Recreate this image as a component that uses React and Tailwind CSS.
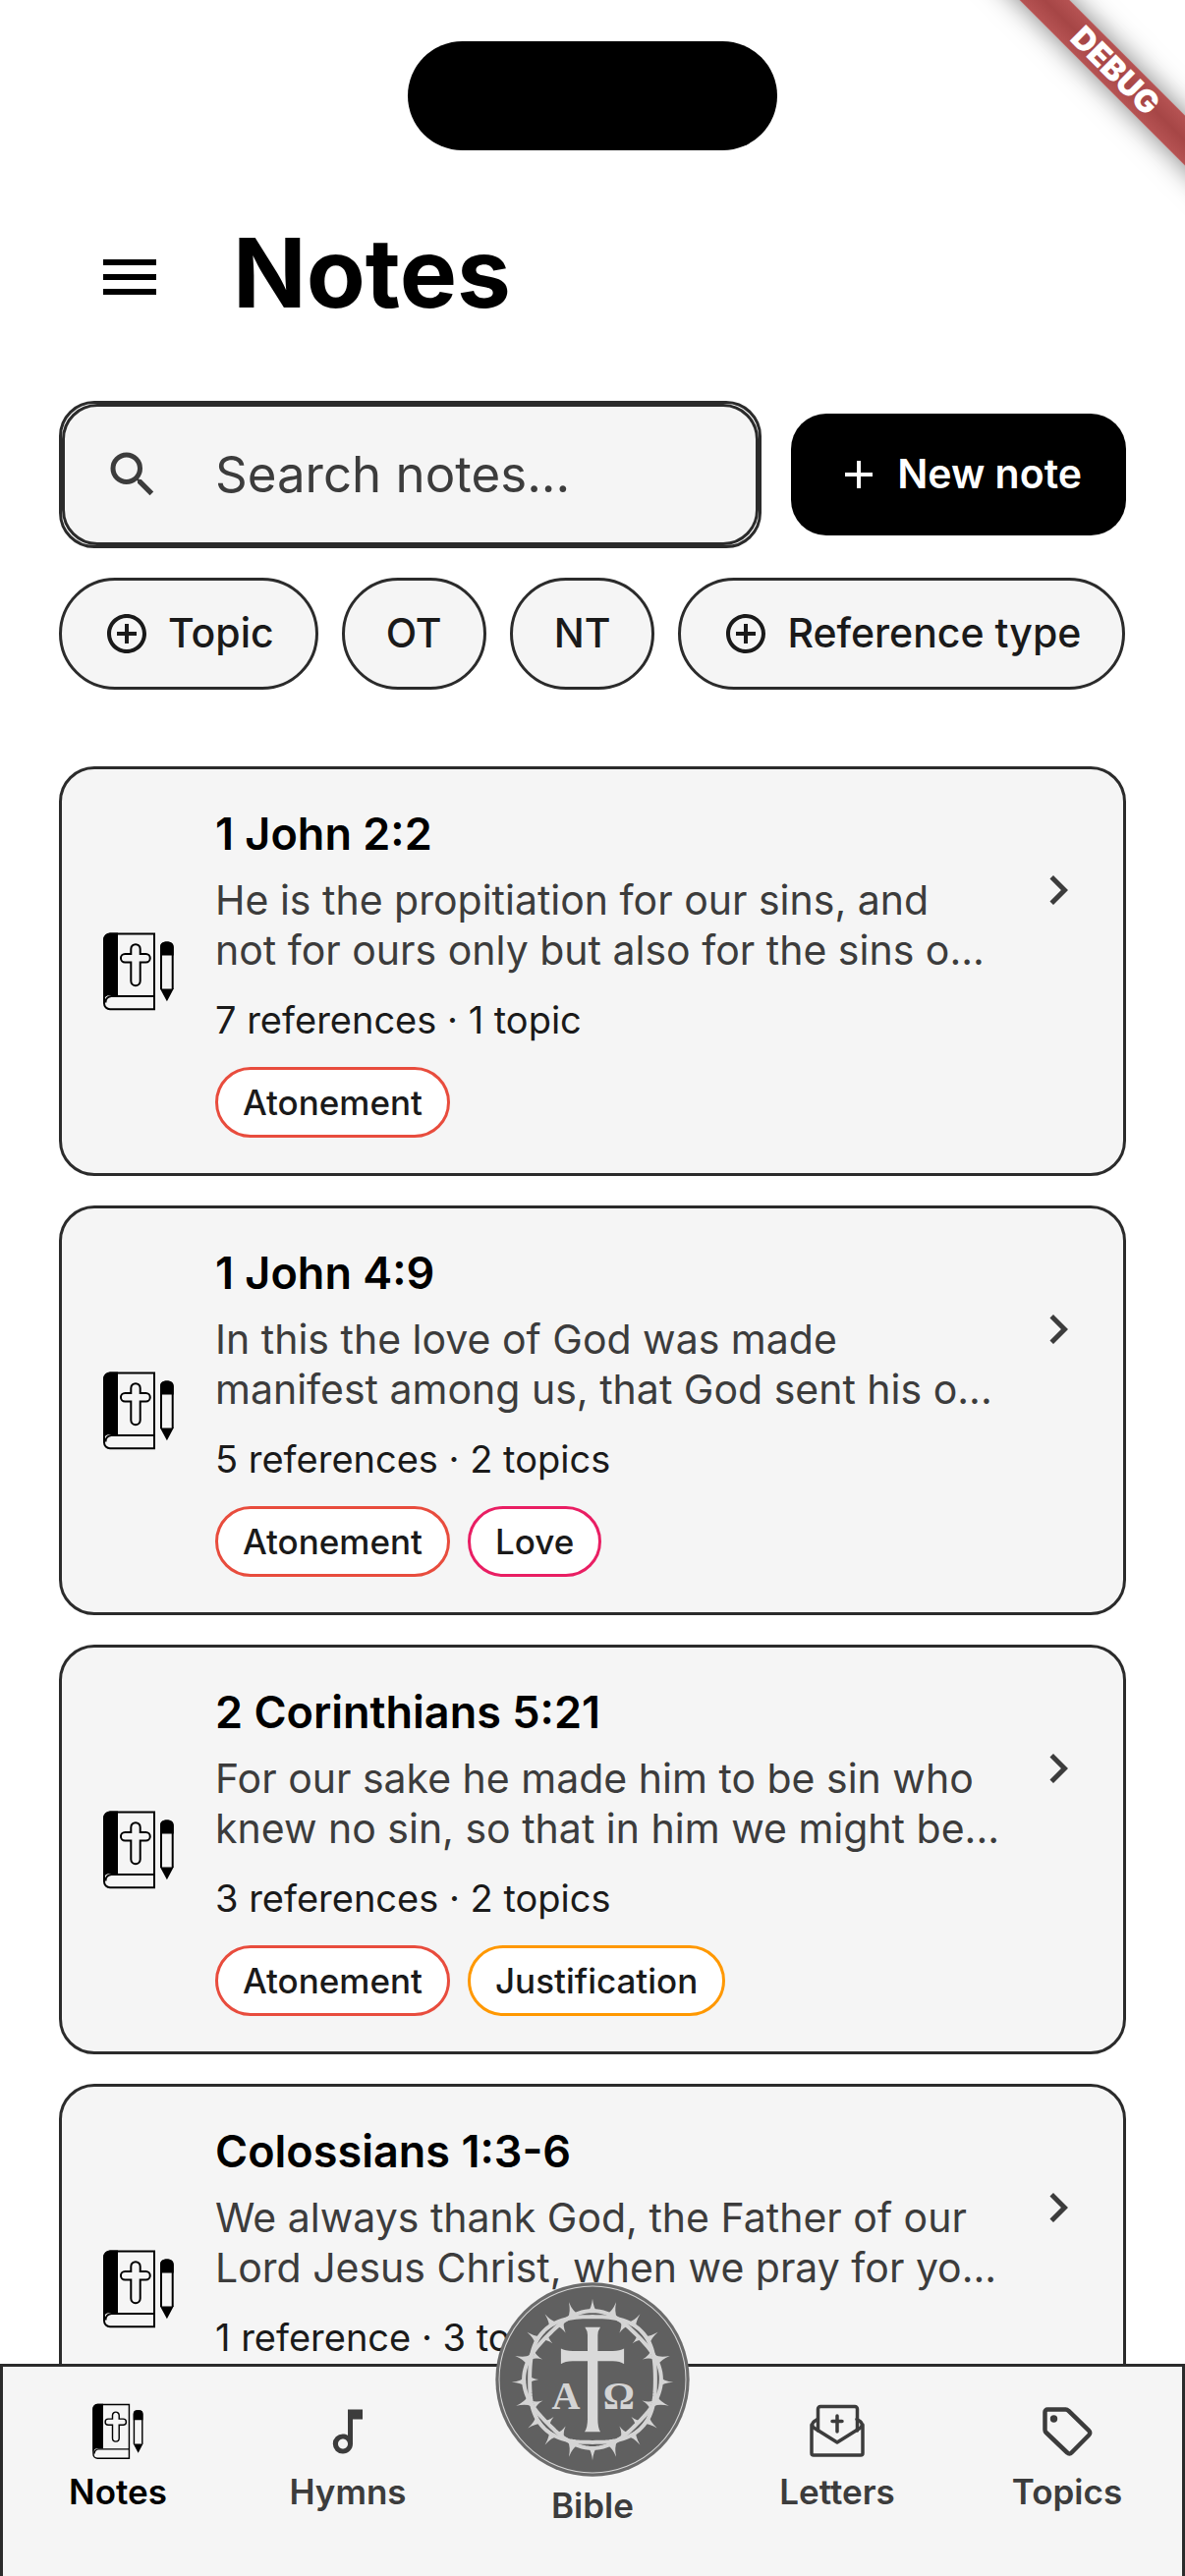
import { useState } from 'react'
import { MdAdd, MdAddCircleOutline, MdChevronRight, MdMenu, MdOutlineMusicNote, MdSearch } from 'react-icons/md'

const notes = [
  {
    title: '1 John 2:2',
    lines: ['He is the propitiation for our sins, and', 'not for ours only but also for the sins o...'],
    meta: '7 references · 1 topic',
    topics: ['Atonement']
  },
  {
    title: '1 John 4:9',
    lines: ['In this the love of God was made', 'manifest among us, that God sent his o...'],
    meta: '5 references · 2 topics',
    topics: ['Atonement', 'Love']
  },
  {
    title: '2 Corinthians 5:21',
    lines: ['For our sake he made him to be sin who', 'knew no sin, so that in him we might be...'],
    meta: '3 references · 2 topics',
    topics: ['Atonement', 'Justification']
  },
  {
    title: 'Colossians 1:3-6',
    lines: ['We always thank God, the Father of our', 'Lord Jesus Christ, when we pray for yo...'],
    meta: '1 reference · 3 topics',
    topics: []
  }
]

const topicColors = {
  Atonement: 'border-[#e84c3d]',
  Love: 'border-[#e91e63]',
  Justification: 'border-[#ff9800]'
}

// book with a cross and a pencil beside it
const NotesIcon = ({ className }) => (
  <svg viewBox="0 0 84 84" className={className} fill="none" stroke="currentColor" strokeWidth="2" aria-hidden="true">
    <path d="M13 3.500h45v76.700H13a6 6 0 0 1-6-6V10A6.500 6.500 0 0 1 13 3.500z" />
    <path d="M21 2.500h-8a7 7 0 0 0-7 7v65c0-6 3-8.500 7-8.500h8z" fill="currentColor" stroke="none" />
    <path d="M58 67H14.500a6 6 0 0 0-6 6.500" />
    <path d="M39 14.200a4.700 4.700 0 0 1 4.700 4.700V24H49.500a4.200 4.200 0 0 1 0 8.500h-5.800v19a4.700 4.700 0 0 1-9.400 0v-19H28.200a4.200 4.200 0 0 1 0-8.500h6.100v-5.100A4.700 4.700 0 0 1 39 14.200z" />
    <path d="M65 60V17a4.500 4.500 0 0 1 4.500-4.500h2.700a4.500 4.500 0 0 1 4.500 4.500v43" />
    <path d="M64 25.500V17a5.500 5.500 0 0 1 5.500-5.500h2.700a5.500 5.500 0 0 1 5.500 5.500v8.500zM64 59.500h13.700l-6.800 12.800z" fill="currentColor" stroke="none" />
  </svg>
)

const LettersIcon = ({ className }) => (
  <svg viewBox="0 0 60 60" className={className} fill="none" stroke="currentColor" strokeWidth="3.500" strokeLinejoin="round" strokeLinecap="round" aria-hidden="true">
    <path d="M10.500 29V7a2.500 2.500 0 0 1 2.500-2.500h35A2.500 2.500 0 0 1 50.500 7v22" />
    <path d="M10 17.500l-3.500 2.200a4 4 0 0 0 0 6.600L30 41l23.500-14.700a4 4 0 0 0 0-6.600L50 17.500" />
    <path d="M4 23v29a2 2 0 0 0 2 2h48a2 2 0 0 0 2-2V23" />
    <path d="M30 14v16M25 19.500h10" />
  </svg>
)

const TopicsIcon = ({ className }) => (
  <svg viewBox="0 0 60 60" className={className} fill="none" stroke="currentColor" strokeWidth="4.500" strokeLinejoin="round" aria-hidden="true">
    <path d="M10 7.500h18.500a4 4 0 0 1 2.800 1.200l21 20.500a3 3 0 0 1 0 4.300L34.500 51.500a3 3 0 0 1-4.300 0L8.700 31a4 4 0 0 1-1.200-2.800V10A2.500 2.500 0 0 1 10 7.500z" />
    <circle cx="16.500" cy="17" r="3.700" fill="currentColor" stroke="none" />
  </svg>
)

// one strand of the crown: a circle whose radius swings in and out
const strand = swing => {
  const points = []
  for (let deg = 0; deg < 360; deg += 3) {
    const t = (deg * Math.PI) / 180
    const r = 200 + swing * Math.cos(4 * t)
    points.push(`${(r * Math.sin(t)).toFixed(1)} ${(-r * Math.cos(t)).toFixed(1)}`)
  }
  return `M${points.join('L')}Z`
}

// a thorn with curved sides, turned to its angle on the crown
const thorn = (deg, base, tip, half) => {
  const bend = base + (tip - base) * 0.3
  return { deg, d: `M${-half} ${-base}Q-3 ${-bend} 0 ${-tip}Q3 ${-bend} ${half} ${-base}Z` }
}

const thorns = [
  ...[0, 17, 36, 54, 73, 92, 109, 127, 144, 163, 180, 197, 216, 233, 251, 268, 287, 306, 324, 343]
    .map(deg => thorn(deg, 203, 246, 16)),
  ...[30, 48, 68, 113, 134, 150, 210, 226, 247, 270, 292, 312, 330]
    .map(deg => thorn(deg, 194, 164, 12))
]

const BibleEmblem = ({ className }) => (
  <svg viewBox="-296 -296 592 592" className={className} aria-hidden="true">
    <circle r="295" fill="#6b6b6b" />
    <circle r="284" fill="#606060" stroke="#d6d6d6" strokeWidth="3" />
    <g fill="#d4d4d4">
      {thorns.map(({ deg, d }) => <path key={deg + d} d={d} transform={`rotate(${deg})`} />)}
    </g>
    <g fill="none" stroke="#d4d4d4" strokeWidth="12">
      <path d={strand(9)} />
      <path d={strand(-9)} />
    </g>
    <path
      fill="#d9d9d9"
      d="M-23-159H24Q16-148 16-135V-87H62Q84-87 96-94V-47Q84-56 62-56H16V120Q16 146 24 159H-24Q-15 146-15 120V-56H-60Q-84-56-96-47V-94Q-84-87-60-87H-15V-135Q-15-148-23-159Z"
    />
    <g fill="#d4d4d4" fontSize="120" fontWeight="700" textAnchor="middle" className="font-['Liberation_Serif',serif]">
      <text x="-81" y="90">Α</text>
      <text x="80" y="90">Ω</text>
    </g>
  </svg>
)

const FilterChip = ({ label, icon }) => (
  <button
    type="button"
    className="flex h-[114px] items-center gap-[18px] rounded-full border-3 border-[#2b2b2b] bg-[#f5f5f5] px-[42px] text-[41px] font-medium whitespace-nowrap text-[#1a1a1a]"
  >
    {icon && <MdAddCircleOutline className="size-12" />}
    {label}
  </button>
)

const NoteCard = ({ note }) => (
  <a href="#note" className="flex gap-6 rounded-[36px] border-3 border-[#2b2b2b] bg-[#f5f5f5] p-9">
    <NotesIcon className="mr-3 size-[84px] shrink-0 self-center text-black" />
    <div className="min-w-0 flex-1">
      <h2 className="text-[45px] leading-[60px] font-semibold text-black">{note.title}</h2>
      <p className="mt-3 text-[41px] leading-[51px] whitespace-nowrap text-[#3c3c3c]">
        {note.lines[0]}<br />{note.lines[1]}
      </p>
      <p className="mt-[21px] text-[38px] leading-[48px] text-[#1a1a1a]">{note.meta}</p>
      <ul className="mt-6 flex h-[72px] gap-[18px]">
        {note.topics.map(topic => (
          <li
            key={topic}
            className={`flex items-center rounded-full border-3 bg-white px-[25px] text-[35px] font-medium text-[#1a1a1a] ${topicColors[topic]}`}
          >{topic}</li>
        ))}
      </ul>
    </div>
    <MdChevronRight className="mt-[57px] size-15 shrink-0 text-[#3c3c3c]" />
  </a>
)

const NavItem = ({ label, children, active }) => (
  <a
    href={`#${label.toLowerCase()}`}
    className={`flex flex-1 flex-col items-center gap-2.5 pt-9 text-[35px] leading-[42px] font-semibold ${active ? 'text-black' : 'text-[#3c3c3c]'}`}
  >
    {children}
    {label}
  </a>
)

const App = () => {
  const [ search, setSearch ] = useState('')

  return (
    <div className="relative flex h-screen flex-col overflow-hidden bg-white font-['Inter',sans-serif]">
      <div className="mx-auto mt-[42px] h-[111px] w-[376px] shrink-0 rounded-full bg-black" />
      <div className="absolute top-[54px] right-[-129px] flex h-9 w-[400px] rotate-45 items-center justify-center bg-linear-to-b from-[#b65353] via-[#a64646] to-[#b65353] text-[32px] font-black text-white shadow-[0_0_28px_rgba(0,0,0,0.5)]">
        DEBUG
      </div>

      <header className="mt-[69px] flex shrink-0 items-center gap-[69px] px-24">
        <button type="button" aria-label="Menu">
          <MdMenu className="size-[72px]" />
        </button>
        <h1 className="pb-2 text-[98px] leading-[112px] font-bold text-black">Notes</h1>
      </header>

      <main className="min-h-0 flex-1 overflow-hidden px-15 pt-[66px]">
        <div className="flex items-center gap-[30px]">
          <label className="flex h-[150px] min-w-0 flex-1 rounded-[36px] border-3 border-[#2b2b2b]">
            <span className="flex min-w-0 flex-1 items-center gap-[54px] rounded-[36px] border-3 border-[#2b2b2b] bg-[#f5f5f5] px-[39px]">
              <MdSearch className="size-15 shrink-0 text-[#3c3c3c]" />
              <input
                type="text"
                aria-label="Search notes"
                placeholder="Search notes..."
                className="w-full min-w-0 text-[51px] text-[#3c3c3c] outline-none placeholder:text-[#3c3c3c]"
                value={search}
                onChange={ e => setSearch(e.target.value)}
              />
            </span>
          </label>
          <button
            type="button"
            className="flex h-[124px] shrink-0 items-center gap-[15px] rounded-[36px] bg-black px-[45px] text-[41px] font-semibold text-white"
          >
            <MdAdd className="size-12" />
            New note
          </button>
        </div>

        <div className="mt-[30px] flex gap-6">
          <FilterChip label="Topic" icon />
          <FilterChip label="OT" />
          <FilterChip label="NT" />
          <FilterChip label="Reference type" icon />
        </div>

        <div className="mt-[78px] flex flex-col gap-[30px]">
          {notes.map(note => <NoteCard key={note.title} note={note} />)}
        </div>
      </main>

      <nav className="relative flex h-[216px] shrink-0 border-3 border-b-0 border-[#2b2b2b] bg-[#f5f5f5]">
        <NavItem label="Notes" active><NotesIcon className="size-15" /></NavItem>
        <NavItem label="Hymns"><MdOutlineMusicNote className="size-15" /></NavItem>
        <a href="#bible" className="flex w-[264px] flex-col items-center pt-30 text-[35px] leading-[42px] font-semibold text-[#3c3c3c]">
          <BibleEmblem className="absolute top-[-86px] size-[198px]" />
          Bible
        </a>
        <NavItem label="Letters"><LettersIcon className="size-15" /></NavItem>
        <NavItem label="Topics"><TopicsIcon className="size-15" /></NavItem>
      </nav>
    </div>
  )
}

export default App
